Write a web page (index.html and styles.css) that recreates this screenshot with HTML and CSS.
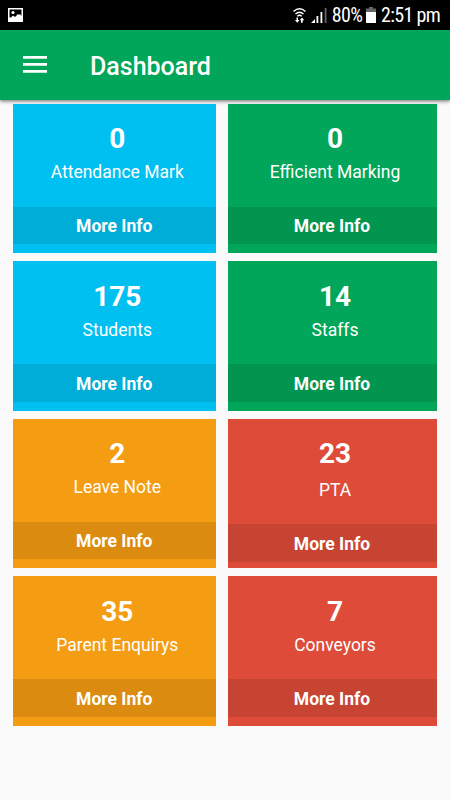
FILE: index.html
```html
<!DOCTYPE html>
<html lang="en">
  <head>
    <meta charset="utf-8">
    <title>Dashboard</title>
    <link rel="stylesheet" href="styles.css">
  </head>
  <body>
    <div class="status-bar">
      <svg class="icon-picture" width="15" height="14" viewBox="0 0 15 14">
        <path fill="#fff" fill-rule="evenodd" d="M0 0h15v14H0zM1.500 1.500v8l1.500 0 2-2 2 1.500 3-3 1 1 1 -1 1.500 2V1.500z" />
        <circle cx="5" cy="4.500" r="1.600" fill="#fff" />
      </svg>
      <div class="status-right">
        <svg class="icon-wifi" width="13" height="15" viewBox="0 0 13 15">
          <g fill="none" stroke="#fff" stroke-width="1.4">
            <path d="M.5 3.500Q6.500-1.800 12.500 3.500" />
            <path d="M2.500 6Q6.500 2.300 10.500 6" />
            <path d="M4.300 8.300Q6.500 6.200 8.700 8.300" />
          </g>
          <path fill="#fff" d="M3.500 9.500H5V12h1.500L4.200 14.800 2 12h1.500zM8 14.800v-2.500H6.800L9 9.500l2.200 2.800H9.700v2.500z" />
        </svg>
        <svg class="icon-signal" width="16" height="15" viewBox="0 0 16 15">
          <path fill="#fff" d="M0 15l4-4v4zM5.500 8h1.800v7H5.500zM9.500 4h1.800v11H9.500z" />
          <path fill="#666" d="M13.700 0h1.800v15h-1.800z" />
        </svg>
        <span class="battery-text">80%</span>
        <svg class="icon-battery" width="10" height="16" viewBox="0 0 10 16">
          <path fill="#666" d="M3 0h4v1.500h3V5H0V1.500h3z" />
          <path fill="#fff" d="M0 5h10v11H0z" />
        </svg>
        <span class="clock">2:51 pm</span>
      </div>
    </div>

    <div class="app-bar">
      <svg class="icon-menu" width="24" height="17" viewBox="0 0 24 17">
        <path fill="#fff" d="M0 0h24v2.700H0zM0 7h24v2.700H0zM0 14h24v2.700H0z" />
      </svg>
      <h1>Dashboard</h1>
    </div>

    <div class="cards">
      <div class="card blue">
        <div class="count">0</div>
        <div class="label">Attendance Mark</div>
        <div class="more">More Info</div>
      </div>
      <div class="card green">
        <div class="count">0</div>
        <div class="label">Efficient Marking</div>
        <div class="more">More Info</div>
      </div>
      <div class="card blue">
        <div class="count">175</div>
        <div class="label">Students</div>
        <div class="more">More Info</div>
      </div>
      <div class="card green">
        <div class="count">14</div>
        <div class="label">Staffs</div>
        <div class="more">More Info</div>
      </div>
      <div class="card orange">
        <div class="count">2</div>
        <div class="label">Leave Note</div>
        <div class="more">More Info</div>
      </div>
      <div class="card red spaced">
        <div class="count">23</div>
        <div class="label">PTA</div>
        <div class="more">More Info</div>
      </div>
      <div class="card orange">
        <div class="count">35</div>
        <div class="label">Parent Enquirys</div>
        <div class="more">More Info</div>
      </div>
      <div class="card red">
        <div class="count">7</div>
        <div class="label">Conveyors</div>
        <div class="more">More Info</div>
      </div>
    </div>
  </body>
</html>
```

FILE: styles.css
```css
body {
  margin: 0;
  height: 800px;
  overflow: hidden;
  background-color: #fafafa;
  font-family: Roboto, sans-serif;
  color: #fff;
}

.status-bar {
  display: flex;
  justify-content: space-between;
  align-items: center;
  height: 30px;
  padding: 0 10px 0 8px;
  box-sizing: border-box;
  background-color: #000;
}

.status-right {
  display: flex;
  align-items: center;
  font-family: "Roboto Condensed", Roboto, sans-serif;
  font-size: 20px;
  font-stretch: 75%;
  letter-spacing: -0.7px;
}

.icon-signal {
  margin: 0 5px 0 5px;
}

.icon-battery {
  margin: 0 5px 0 4px;
}

.app-bar {
  display: flex;
  align-items: center;
  height: 70px;
  padding-left: 23px;
  background-color: #02a65a;
  box-shadow: 0 1px 4px rgba(0, 0, 0, 0.6);
}

.icon-menu {
  margin-top: -1px;
}

.app-bar h1 {
  margin: 2px 0 0 43px;
  font-size: 25px;
  font-weight: 500;
}

.cards {
  display: grid;
  grid-template-columns: 203.5px 209px;
  grid-auto-rows: 149.5px;
  gap: 8px 11.5px;
  padding: 3.9px 12.5px;
}

.card {
  text-align: center;
}

.blue {
  background-color: #00c0f1;
}

.green {
  background-color: #02a65a;
}

.orange {
  background-color: #f49c12;
}

.red {
  background-color: #de4c39;
}

.count {
  padding: 18.4px 0 0 6px;
  font-size: 28px;
  line-height: 34px;
  font-weight: 700;
}

.label {
  padding: 5px 0 0 6px;
  font-size: 17.5px;
  line-height: 22px;
}

.more {
  margin-top: 23.5px;
  padding-top: 2.5px;
  background-color: rgba(0, 0, 0, 0.1);
  font-size: 17.5px;
  line-height: 35px;
  font-weight: 700;
}

.spaced .label {
  padding-top: 7.5px;
}
```
